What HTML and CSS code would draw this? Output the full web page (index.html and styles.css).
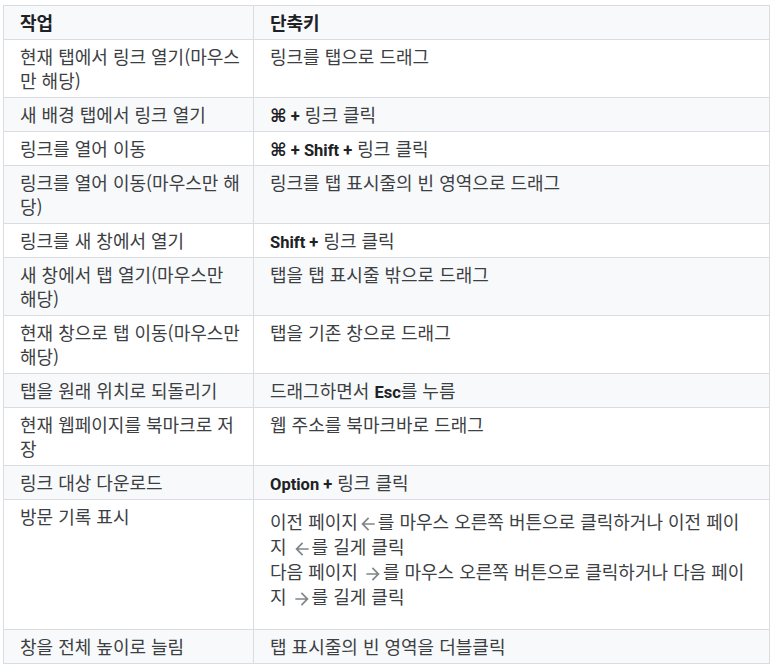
FILE: index.html
```html
<!DOCTYPE html>
<html lang="ko">
<head>
<meta charset="utf-8">
<title>단축키</title>
<link rel="stylesheet" href="styles.css">
</head>
<body>
<table class="shortcuts">
  <colgroup>
    <col class="col-task">
    <col class="col-key">
  </colgroup>
  <thead>
    <tr><th>작업</th><th>단축키</th></tr>
  </thead>
  <tbody>
    <tr><td>현재 탭에서 링크 열기(마우스<br>만 해당)</td><td>링크를 탭으로 드래그</td></tr>
    <tr><td>새 배경 탭에서 링크 열기</td><td><b><span class="cmd">⌘</span> +</b> 링크 클릭</td></tr>
    <tr><td>링크를 열어 이동</td><td><b><span class="cmd">⌘</span> + Shift +</b> 링크 클릭</td></tr>
    <tr><td>링크를 열어 이동(마우스만 해<br>당)</td><td>링크를 탭 표시줄의 빈 영역으로 드래그</td></tr>
    <tr><td>링크를 새 창에서 열기</td><td><b>Shift +</b> 링크 클릭</td></tr>
    <tr><td>새 창에서 탭 열기(마우스만<br>해당)</td><td>탭을 탭 표시줄 밖으로 드래그</td></tr>
    <tr><td>현재 창으로 탭 이동(마우스만<br>해당)</td><td>탭을 기존 창으로 드래그</td></tr>
    <tr><td>탭을 원래 위치로 되돌리기</td><td>드래그하면서 <b>Esc</b>를 누름</td></tr>
    <tr><td>현재 웹페이지를 북마크로 저<br>장</td><td>웹 주소를 북마크바로 드래그</td></tr>
    <tr><td>링크 대상 다운로드</td><td><b>Option +</b> 링크 클릭</td></tr>
    <tr>
      <td>방문 기록 표시</td>
      <td>
        <div class="history">이전 페이지<svg class="arrow" viewBox="0 0 24 24" aria-hidden="true"><path d="M20 11H7.83l5.59-5.59L12 4l-8 8 8 8 1.41-1.41L7.83 13H20v-2z"/></svg>를 마우스 오른쪽 버튼으로 클릭하거나 이전 페이<br>지 <svg class="arrow" viewBox="0 0 24 24" aria-hidden="true"><path d="M20 11H7.83l5.59-5.59L12 4l-8 8 8 8 1.41-1.41L7.83 13H20v-2z"/></svg>를 길게 클릭<br>다음 페이지 <svg class="arrow" viewBox="0 0 24 24" aria-hidden="true"><path d="M12 4l-1.41 1.41L16.17 11H4v2h12.17l-5.58 5.59L12 20l8-8z"/></svg>를 마우스 오른쪽 버튼으로 클릭하거나 다음 페이<br>지 <svg class="arrow" viewBox="0 0 24 24" aria-hidden="true"><path d="M12 4l-1.41 1.41L16.17 11H4v2h12.17l-5.58 5.59L12 20l8-8z"/></svg>를 길게 클릭</div>
      </td>
    </tr>
    <tr><td>창을 전체 높이로 늘림</td><td>탭 표시줄의 빈 영역을 더블클릭</td></tr>
  </tbody>
</table>
</body>
</html>
```

FILE: styles.css
```css
html, body {
  background: #ffffff;
}

body {
  margin: 5px 3px;
  font-family: "Noto Sans CJK KR", Roboto, sans-serif;
  font-size: 18px;
  line-height: 24px;
  color: #3c4043;
}

.shortcuts {
  width: 767px;
  border-collapse: collapse;
  table-layout: fixed;
}

.col-task {
  width: 250px;
}

.shortcuts th,
.shortcuts td {
  border: 1px solid #dadce0;
  padding: 4px 4px 5px 16px;
  text-align: left;
  vertical-align: top;
  white-space: nowrap;
}

.shortcuts th {
  background: #f8f9fa;
  color: #202124;
  font-weight: 700;
}

.shortcuts tbody tr:nth-child(even) td {
  background: #f8f9fa;
}

.shortcuts b {
  font-family: Roboto, "Noto Sans CJK KR", sans-serif;
  font-size: 16.5px;
  line-height: 16px;
  font-weight: 700;
  color: #202124;
}

.cmd {
  font-family: "DejaVu Sans", sans-serif;
  font-size: 18px;
  line-height: 16px;
  font-weight: 700;
}

.history {
  margin: 5px 0 15px;
}

.arrow {
  width: 20px;
  height: 20px;
  fill: #80868b;
  vertical-align: -5px;
}
```
